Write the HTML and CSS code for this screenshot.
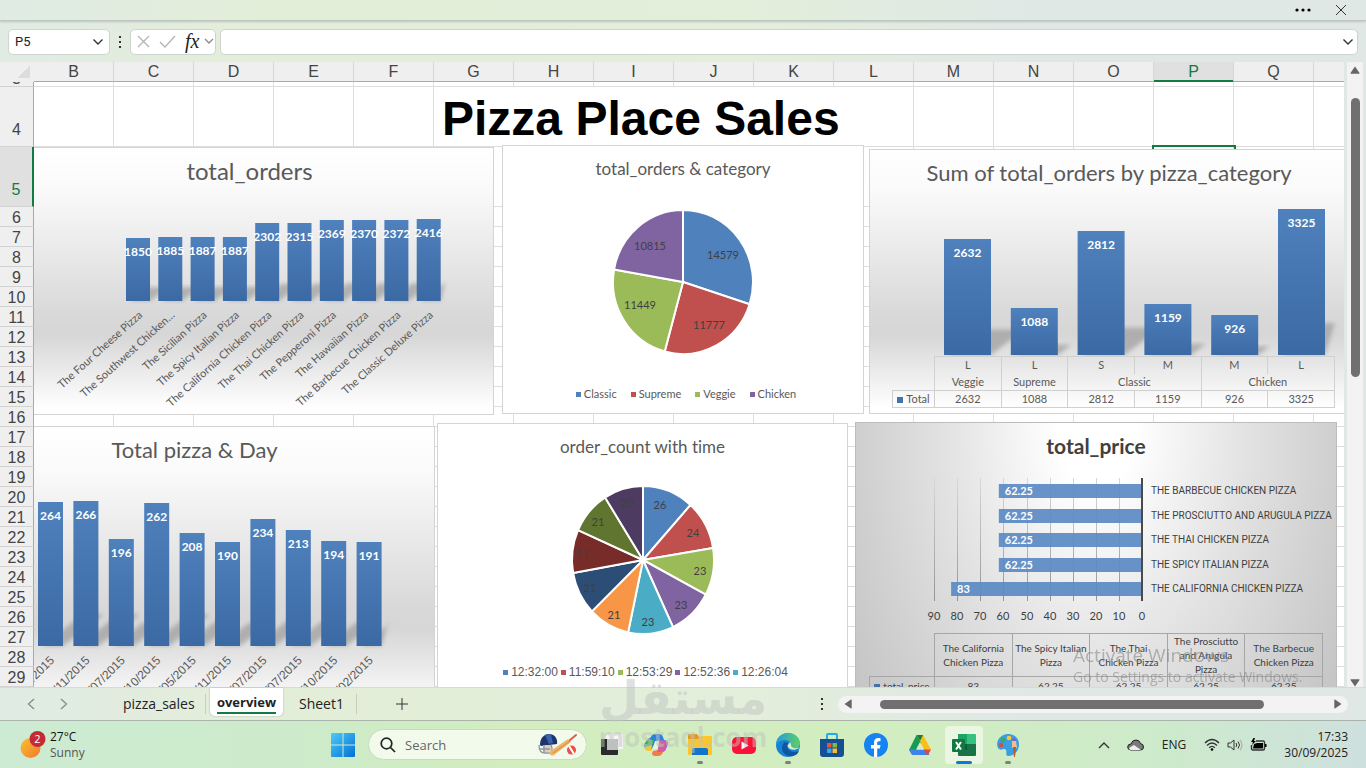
FILE: index.html
```html
<!DOCTYPE html>
<html lang="en">
<head>
<meta charset="utf-8">
<title>Pizza Place Sales</title>
<link rel="stylesheet" href="styles.css">
</head>
<body>
<div class="app">
  <header class="ribbon">
    <button class="plain" aria-label="More"><svg width="16" height="6" viewBox="0 0 16 6"><circle cx="2" cy="3" r="1.6"/><circle cx="8" cy="3" r="1.6"/><circle cx="14" cy="3" r="1.6"/></svg></button>
    <button class="plain" aria-label="Close"><svg width="12" height="12" viewBox="0 0 12 12"><path class="line" d="M1 1l10 10M11 1L1 11"/></svg></button>
  </header>

  <div class="formula-bar">
    <div class="name-box">
      <input class="name-input" aria-label="Name box" value="P5">
      <button class="plain" aria-label="Open names"><svg width="12" height="8" viewBox="0 0 12 8"><path class="line bold" d="M1.500 1.500L6 6l4.500-4.500"/></svg></button>
    </div>
    <svg class="grip" width="4" height="12" viewBox="0 0 4 12"><path d="M1 0h2v2H1zM1 5h2v2H1zM1 10h2v2H1z"/></svg>
    <div class="fx-box">
      <button class="plain" aria-label="Cancel"><svg width="13" height="13" viewBox="0 0 13 13"><path class="line pale" d="M1 1l11 11M12 1L1 12"/></svg></button>
      <button class="plain" aria-label="Enter"><svg width="17" height="13" viewBox="0 0 17 13"><path class="line pale" d="M1 7l5 5L16 1"/></svg></button>
      <button class="plain fx" aria-label="Insert function"><i>fx</i><svg width="10" height="7" viewBox="0 0 10 7"><path class="line mid" d="M1 1l4 4 4-4"/></svg></button>
    </div>
    <div class="formula-box">
      <input class="formula-input" aria-label="Formula">
      <button class="plain" aria-label="Expand formula bar"><svg width="12" height="8" viewBox="0 0 12 8"><path class="line bold" d="M1.500 1.500L6 6l4.500-4.500"/></svg></button>
    </div>
  </div>

  <main class="workbook">
    <div class="sheet">
      <table class="grid" id="grid"></table>
      <div class="canvas">
        <figure class="chart shade orders">
          <figcaption class="size-xl">total_orders</figcaption>
          <svg id="orders" width="487" height="220" viewBox="6 194 487 220"></svg>
        </figure>
        <figure class="chart category">
          <figcaption class="size-s">total_orders &amp; category</figcaption>
          <svg id="category" width="360" height="192" viewBox="503 192 360 192"></svg>
          <ul class="legend">
            <li class="c1">Classic</li><li class="c2">Supreme</li><li class="c3">Veggie</li><li class="c4">Chicken</li>
          </ul>
        </figure>
        <figure class="chart shade bycat">
          <figcaption class="size-l">Sum of total_orders by pizza_category</figcaption>
          <svg id="bycat" width="478" height="160" viewBox="870 196 478 160"></svg>
          <table class="data">
            <tr class="open"><th class="none"></th><td>L</td><td>L</td><td>S</td><td>M</td><td>M</td><td>L</td></tr>
            <tr class="groups"><th class="none"></th><td>Veggie</td><td>Supreme</td><td colspan="2">Classic</td><td colspan="2">Chicken</td></tr>
            <tr><th class="key">Total</th><td>2632</td><td>1088</td><td>2812</td><td>1159</td><td>926</td><td>3325</td></tr>
          </table>
        </figure>
        <figure class="chart shade byday">
          <figcaption class="size-l">Total pizza &amp; Day</figcaption>
          <svg id="byday" width="479" height="240" viewBox="-45 473 479 240"></svg>
        </figure>
        <figure class="chart bytime">
          <figcaption class="size-s">order_count with time</figcaption>
          <svg id="bytime" width="409" height="192" viewBox="438 470 409 192"></svg>
          <ul class="legend times">
            <li class="c1">12:32:00</li><li class="c2">11:59:10</li><li class="c3">12:53:29</li><li class="c4">12:52:36</li><li class="c5">12:26:04</li>
          </ul>
        </figure>
        <figure class="chart price">
          <figcaption class="strong">total_price</figcaption>
          <svg id="price" width="480" height="164" viewBox="856 469 480 164"></svg>
          <table class="data dark">
            <tr class="names"><th class="none"></th><td>The California Chicken&nbsp;Pizza</td><td>The Spicy Italian Pizza</td><td>The Thai Chicken&nbsp;Pizza</td><td>The Prosciutto and Arugula Pizza</td><td>The Barbecue Chicken&nbsp;Pizza</td></tr>
            <tr class="values"><th class="key">total_price</th><td>83</td><td>62.25</td><td>62.25</td><td>62.25</td><td>62.25</td></tr>
          </table>
        </figure>
      </div>
    </div>
    <div class="vscroll">
      <svg width="10" height="8" viewBox="0 0 10 8"><path d="M5 .5L9.500 7q.2.700-.5.700H1Q.3 7.700.5 7z"/></svg>
      <div class="vtrack"><div class="vthumb"></div></div>
      <svg width="10" height="8" viewBox="0 0 10 8"><path d="M5 7.500L.5 1Q.3.300 1 .3h8q.7 0 .5.700z"/></svg>
    </div>
  </main>

  <nav class="tabs">
    <div class="tab-nav">
      <button class="plain" aria-label="Previous sheet"><svg width="8" height="12" viewBox="0 0 8 12"><path class="line mid" d="M7 1L1.500 6 7 11"/></svg></button>
      <button class="plain" aria-label="Next sheet"><svg width="8" height="12" viewBox="0 0 8 12"><path class="line mid" d="M1 1l5.500 5L1 11"/></svg></button>
    </div>
    <button class="tab first">pizza_sales</button>
    <button class="tab active"><span>overview</span></button>
    <button class="tab">Sheet1</button>
    <button class="plain add" aria-label="New sheet"><svg width="12" height="12" viewBox="0 0 12 12"><path class="line" d="M6 0v12M0 6h12"/></svg></button>
    <svg class="grip push" width="4" height="12" viewBox="0 0 4 12"><path d="M1 0h2v2H1zM1 5h2v2H1zM1 10h2v2H1z"/></svg>
    <div class="hscroll">
      <svg width="8" height="10" viewBox="0 0 8 10"><path d="M.5 5L7 .5q.7-.2.7.500v8q0 .7-.7.500z"/></svg>
      <div class="htrack"><div class="hthumb"></div></div>
      <svg width="8" height="10" viewBox="0 0 8 10"><path d="M7.500 5L1 .5Q.3.300.3 1v8q0 .7.700.5z"/></svg>
    </div>
  </nav>

  <footer class="taskbar">
    <button class="weather">
      <svg width="28" height="28" viewBox="0 0 28 28">
        <defs><linearGradient id="sun" x1="0" y1="0" x2="1" y2="1"><stop offset="0" stop-color="#fdc02f"/><stop offset="1" stop-color="#ee7a30"/></linearGradient></defs>
        <circle cx="10.500" cy="17" r="10" fill="url(#sun)"/><circle cx="17.500" cy="8" r="8" fill="#c42b35"/>
        <text x="17.500" y="12" text-anchor="middle" class="badge">2</text>
      </svg>
      <span class="weather-text"><b>27°C</b><span>Sunny</span></span>
    </button>
    <div class="dock">
      <button class="app-icon start" aria-label="Start"><svg width="24" height="24" viewBox="0 0 24 24"><defs><linearGradient id="win" gradientUnits="userSpaceOnUse" x1="0" y1="0" x2="24" y2="24"><stop offset="0" stop-color="#4ccbfa"/><stop offset="1" stop-color="#0370d6"/></linearGradient></defs><path fill="url(#win)" d="M1 0h10.500v11.500H0V1q0-1 1-1zM12.500 0H23q1 0 1 1v10.500H12.500zM0 12.500h11.500V24H1q-1 0-1-1zM12.500 12.500H24V23q0 1-1 1H12.500z"/></svg></button>
      <label class="search">
        <svg width="16" height="16" viewBox="0 0 16 16"><circle cx="6.500" cy="6.500" r="5.300" class="lens"/><path class="lens" d="M10.500 10.500L15 15"/></svg>
        <input class="search-input" aria-label="Search" placeholder="Search">
        <svg width="40" height="24" viewBox="0 0 40 24">
          <path fill="#1d356b" d="M2 12C2 5 6 1 11 1s9 4 8 10L3 13z"/><path fill="#3c62ad" d="M7 2q4-2 6 0l2 8-4 1z"/>
          <path fill="#e6c9ac" d="M5 12h8v5q-4 4-8 2z"/>
          <path fill="none" stroke="#8798a8" stroke-width="1.300" d="M1 12q0 9 7 8h6M2 16h10M6 12v8M13 12q2 4 0 7"/>
          <path fill="#eeb566" d="M11 19L30 6l3 3-17 13q-4 2-5-3z"/><path stroke="#d95e4c" stroke-width="2" stroke-linecap="round" d="M32 7l6-5"/><path stroke="#cf8b45" d="M15 20L32 8"/>
          <circle cx="33.500" cy="17" r="4.500" fill="#e94f42"/><path fill="none" stroke="#fff" stroke-width="2" d="M31 13l5 8"/>
        </svg>
      </label>
      <div class="apps">
        <button class="app-icon" aria-label="Task view"><svg width="24" height="24" viewBox="0 0 24 24"><path fill="#f7f7f7" d="M6 1h16q1 0 1 1v14H6z"/><path fill="#292c2a" d="M1 6h17v15q0 1-1 1H2q-1 0-1-1z"/><path fill="#bdc0bf" d="M7 6h11v11H7z"/></svg></button>
        <button class="app-icon" aria-label="Copilot"><svg width="24" height="24" viewBox="0 0 24 24">
          <path fill="#2a82dc" d="M7 4q1-3 4-3h5q2 0 3 3l1 3h-5l-4 3-4 7H3Q-1 14 1 10l3-4z"/>
          <path fill="#47b05f" d="M4 7h6L7 17H3Q-1 15 1 11z"/><path fill="#f7c33a" d="M1 14l7-2-1 6H4q-3-1-3-4z"/>
          <path fill="#8c62d5" d="M15 7h5q4 0 4 4l-2 5q-1 3-4 3h-4z"/>
          <path fill="#ef7d4b" d="M9 18l5-1 3-10 4 7-2 5q-1 4-5 4h-3q-3 0-3-3z"/><path fill="#d75c9c" d="M14 16l4-8h5l-2 8q-1 3-4 3h-4z"/>
          <path fill="#e9f5df" d="M11 8h4l-2 8H9z"/></svg></button>
        <button class="app-icon running" aria-label="File Explorer"><svg width="24" height="24" viewBox="0 0 24 24"><path fill="#e49a19" d="M0 2q0-1 1-1h8l2 3v4H0z"/><path fill="#fbc52e" d="M0 6h10l2-3h11q1 0 1 1v17q0 1-1 1H1q-1 0-1-1z"/><path fill="#1176cb" d="M4 22v-5q0-2 2-2h12q2 0 2 2v5z"/></svg></button>
        <button class="app-icon" aria-label="YouTube"><svg width="24" height="24" viewBox="0 0 24 24"><rect y="4" width="24" height="17" rx="5" fill="#fa1238"/><path fill="#fff" d="M9.500 8.500l7 4-7 4z"/></svg></button>
        <button class="app-icon running" aria-label="Edge"><svg width="24" height="24" viewBox="0 0 24 24">
          <defs><linearGradient id="edge" x1="0" x2="1"><stop offset="0" stop-color="#249ce0"/><stop offset="1" stop-color="#5fcf64"/></linearGradient></defs>
          <circle cx="12" cy="12" r="12" fill="#1781d4"/><path fill="url(#edge)" d="M0 11C1 4 6 0 12 0c7 0 12 5 12 10 0 6-8 8-10 5 3-4 0-8-5-8-4 0-8 2-9 6z"/>
          <path fill="#0e57a2" d="M9 9c-5 3-4 14 6 14 4 0 7-2 8-5-4 2-9 1-11-2-1-2-1-4 0-6z"/><path fill="#d5edc5" d="M24 14c-3 4-11 3-12 0-1-2 1-3 2-5 2 3 0 5 4 6q3 1 6-1z"/></svg></button>
        <button class="app-icon" aria-label="Store"><svg width="24" height="24" viewBox="0 0 24 24"><path fill="none" stroke="#28a7ea" stroke-width="2" d="M7 6V2q0-1 1-1h8q1 0 1 1v4"/><path fill="#174f92" d="M0 6h24v15q0 3-3 3H3q-3 0-3-3z"/><path fill="#f05036" d="M7 10h4.500v4.500H7z"/><path fill="#7eba3c" d="M12.500 10H17v4.500h-4.500z"/><path fill="#35a9ed" d="M7 15.500h4.500V20H7z"/><path fill="#fdbb2f" d="M12.500 15.500H17V20h-4.500z"/></svg></button>
        <button class="app-icon" aria-label="Facebook"><svg width="24" height="24" viewBox="0 0 24 24"><circle cx="12" cy="12" r="12" fill="#1583f2"/><path fill="#fff" d="M10 24v-8.500H7V12h3V9.500C10 6.500 11.700 5 14.300 5c1 0 2.200.2 2.200.2v3H15c-1.400 0-1.800.8-1.800 1.700V12h3.300l-.6 3.500h-2.700V24z"/></svg></button>
        <button class="app-icon" aria-label="Google Drive"><svg width="24" height="24" viewBox="0 0 24 24"><path fill="#159c54" d="M8.500 2h3.500l3 5L5.500 22 1 17z"/><path fill="#fdbd18" d="M9 2h6l8 14.500h-7z"/><path fill="#3c83ed" d="M1 16.500h17L21.500 22H5q-1 0-2-1.500z"/><path fill="#e94538" d="M16 16.500h7L20.500 21l-1.500 1z"/><path fill="#d4ecc5" d="M12 9l4 7.500H8z"/><path fill="#187b42" d="M9 2h6l-3 6z"/></svg></button>
        <button class="app-icon current" aria-label="Excel"><svg width="24" height="24" viewBox="0 0 24 24"><path fill="#21a265" d="M6 1h9v10H6z"/><path fill="#35c281" d="M15 1h8q1 0 1 1v9h-9z"/><path fill="#187447" d="M6 11h18v11q0 1-1 1H7q-1 0-1-1z"/><path fill="#115c37" d="M15 11v6H6v-6z"/><rect y="6" width="13" height="13" rx="1" fill="#107840"/><path fill="none" stroke="#fff" stroke-width="2" d="M4 9l5 7.500M9 9l-5 7.500"/></svg></button>
        <button class="app-icon running" aria-label="Paint"><svg width="24" height="24" viewBox="0 0 24 24"><path fill="#3a9ee3" d="M12 1C4 1-1 9 2 15c3 4 6-1 8 2 1 3-1 6 3 6 7-1 10-6 10-12S18 1 12 1z"/><circle cx="7" cy="7" r="2.300" fill="#3cab51"/><circle cx="13" cy="5" r="2.300" fill="#fac82f"/><circle cx="5" cy="12" r="2.300" fill="#e04a42"/><circle cx="18" cy="7" r="2" fill="#8361bd"/><path fill="#f0c08b" d="M16 8h4l1 7h-5z"/><path fill="#b85c28" d="M17 14h3l-1 10h-1z"/></svg></button>
      </div>
    </div>
    <div class="tray">
      <button class="plain" aria-label="Hidden icons"><svg width="12" height="8" viewBox="0 0 12 8"><path class="line bold" d="M1 7l5-5 5 5"/></svg></button>
      <button class="plain cloud" aria-label="OneDrive"><svg width="17" height="12" viewBox="0 0 17 12"><path fill="#777b7e" stroke="#222" d="M4 11q-3.300 0-3.300-3T4 5q1-4 5-4 3.500 0 4.500 3.500 3 .5 3 3.500 0 3-3 3z"/><path fill="#eee" d="M2 9l5-3 7 5H4q-2 0-2-2z"/></svg></button>
      <button class="plain lang">ENG</button>
      <button class="plain status" aria-label="Network, sound and battery">
        <svg width="16" height="13" viewBox="0 0 16 13"><path class="line bold" d="M1 5q7-7 14 0M3 7.500q5-5 10 0M5.200 9.800q2.800-2.800 5.600 0"/><circle cx="8" cy="11.500" r="1.300"/></svg>
        <svg width="16" height="12" viewBox="0 0 16 12"><path class="line" d="M1 4h2.500L7 1v10L3.500 8H1zM9 4q1.500 2 0 4M11 2.500q3 3.500 0 7"/><path class="line pale" d="M13 1q4 5 0 10"/></svg>
        <svg width="17" height="14" viewBox="0 0 17 14"><path class="line bold" d="M6 3h7q1.500 0 1.500 1.500v6q0 1.500-1.500 1.500H3q-1.500 0-1.500-1.500V7"/><path d="M4 6l3-1h6v5.500H3zM15 6h1.500v3H15zM3.500 0L1 4h2L2 7l4-4H4l1-3z"/></svg>
      </button>
      <div class="clock"><span>17:33</span><span>30/09/2025</span></div>
    </div>
  </footer>
</div>
<div class="activate"><p class="activate-title">Activate Windows</p><p class="activate-text">Go to Settings to activate Windows.</p></div>
<div class="mark"><span class="mark-ar" lang="ar">مستقل</span><span class="mark-en">mostaql.com</span></div>
<script src="charts.js"></script>
</body>
</html>
```
FILE: styles.css
```css
* { box-sizing: border-box; }
body { margin: 0; font-family: "Open Sans", sans-serif; font-size: 12px; color: #222; overflow: hidden; }
button, input { font: inherit; color: inherit; background: none; border: 0; padding: 0; margin: 0; }
input { outline: 0; min-width: 0; }
svg { display: block; flex: none; }
.app { display: flex; flex-direction: column; height: 100vh; background: linear-gradient(90deg, #e0ebe4, #e3eed9 20%, #e3eedb 55%, #dfe8e5 75%, #dfe8e5); }
.plain { display: flex; align-items: center; justify-content: center; }
.line { fill: none; stroke: #333; stroke-width: 1; }
.line.bold { stroke-width: 1.4; }
.line.mid { stroke: #8a8a8a; stroke-width: 1.3; }
.line.pale { stroke: #b4b4b4; stroke-width: 1.3; }

.ribbon { display: flex; justify-content: flex-end; align-items: center; gap: 24px; height: 21px; padding-right: 19px; border-bottom: 1px solid #bfc5c1; box-shadow: 0 1px 2px #bcc4be; }
.formula-bar { display: flex; align-items: center; height: 41px; padding: 0 8px; }
.name-box, .fx-box, .formula-box { display: flex; align-items: center; height: 26px; background: #fff; border: 1px solid #d0d4d0; border-radius: 5px; }
.name-box { width: 102px; padding: 0 5px 0 6px; }
.name-input { flex: 1; font-family: Roboto, sans-serif; font-size: 13px; }
.grip { fill: #333; margin: 0 8px; }
.fx-box { width: 86px; padding: 0 1px 0 6px; gap: 9px; }
.fx { gap: 5px; }
.fx i { font: italic 20px "Liberation Serif", serif; }
.formula-box { flex: 1; margin-left: 4px; padding: 0 3px; }
.formula-input { flex: 1; height: 22px; }

.workbook { flex: 1; display: flex; min-height: 0; }
.sheet { position: relative; flex: 1; min-width: 0; overflow: hidden; background: #fff; }
.grid { border-collapse: separate; border-spacing: 0; table-layout: fixed; width: 1394px; font: 16px "Liberation Sans", sans-serif; color: #444; }
.grid th, .grid td { padding: 0; font-weight: normal; }
.grid col { width: 80px; }
.grid .side { width: 34px; }
.grid thead th { height: 20px; line-height: 18px; padding-top: 1px; background: #efefef; border-right: 1px solid #d6d6d6; border-bottom: 1px solid #a9a9a9; }
.grid thead .picked { background: #e0e0e0; border-bottom-color: #107c41; box-shadow: inset 0 -1px #107c41; color: #107c41; }
.grid thead .corner { border-right-color: #efefef; border-bottom-color: #efefef; background: linear-gradient(135deg, #efefef 50%, #dcdcdc 50%) 18px 4px / 12px 12px no-repeat #efefef; }
.grid tbody th { background: #efefef; border-right: 1px solid #a9a9a9; border-bottom: 1px solid #d2d2d2; }
.grid tbody td { border-right: 1px solid #dedede; border-bottom: 1px solid #dedede; }
.head { display: flex; align-items: flex-end; justify-content: center; height: 19px; line-height: 17px; overflow: hidden; }
.tiny .head { height: 4px; line-height: 14px; }
.tall .head { height: 59px; line-height: 32px; }
.grid .row-picked th { background: #e0e0e0; border-right: 2px solid #107c41; color: #107c41; }
.grid td.cell-picked { outline: 2px solid #107c41; }
.grid .heading { font-weight: bold; font-size: 48px; line-height: 50px; color: #000; padding: 4px 0 0 8px; white-space: nowrap; text-align: left; }

.canvas { position: absolute; inset: 20px 0 0 34px; overflow: hidden; }
.chart { position: absolute; margin: 0; border: 1px solid #d4d4d4; background: #fff; display: flex; flex-direction: column; color: #595959; font-family: Lato, sans-serif; font-size: 11px; font-variant-ligatures: none; overflow: hidden; }
.chart text { font-size: 11px; fill: #595959; }
.chart .value { font-size: 12px; font-weight: bold; fill: #fff; text-anchor: middle; }
.chart .slice { fill: #404040; text-anchor: middle; }
.chart .date { font-family: "Liberation Sans", sans-serif; font-size: 12px; }
.chart .upper { font-family: Roboto, sans-serif; font-size: 10px; fill: #404040; }
.chart .start { text-anchor: start; font-size: 11px; }
.shade { background: linear-gradient(#fff, #fafafa 15%, #d9d9d9 62%, #d6d6d6 70%, #fff 98%); }
.orders { left: -29px; top: 65px; width: 489px; height: 268px; }
.category { left: 468px; top: 63px; width: 362px; height: 269px; }
.bycat { left: 835px; top: 67px; width: 480px; height: 265px; }
.byday { left: -80px; top: 344px; width: 481px; height: 290px; }
.bytime { left: 403px; top: 341px; width: 411px; height: 290px; }
.price { left: 821px; top: 340px; width: 482px; height: 310px; background: radial-gradient(ellipse 320px 520px at 50% 0, #fff 0, #fff 12%, #e4e4e4 45%, #cfcfcf 75%, #bfbfbf); border-color: #bdbdbd; }
figcaption { text-align: center; line-height: 34px; padding: 6px 0; }
.size-s { font-size: 17px; }
.size-l { font-size: 22px; }
.size-xl { font-size: 24px; }
.strong { font-size: 21px; font-weight: bold; color: #404040; }
.legend { display: flex; justify-content: center; gap: 14px; list-style: none; margin: 0; padding: 0 0 0 6px; line-height: 20px; }
.legend li { display: flex; align-items: center; gap: 3px; }
.legend li::before { content: ""; width: 5px; height: 5px; background: currentColor; }
.times { font: 12px "Liberation Sans", sans-serif; line-height: 20px; gap: 3px; }
.legend .c1::before { background: #4f81bd; }
.legend .c2::before { background: #c0504d; }
.legend .c3::before { background: #9bbb59; }
.legend .c4::before { background: #8064a2; }
.legend .c5::before { background: #4bacc6; }
.data { border-collapse: collapse; table-layout: fixed; width: 443px; margin-left: 22px; font-size: 11px; line-height: 14px; text-align: center; }
.data th, .data td { border: 1px solid #d0d0d0; padding: 0; font-weight: normal; height: 17px; }
.data th { width: 42px; }
.data .none { border: 0; }
.data .open td { border-bottom: 0; }
.data .groups td { border-top: 0; }
.key::before { content: ""; display: inline-block; width: 6px; height: 6px; margin-right: 3px; background: #4372ac; }
.dark { width: 454px; margin-left: 13px; font-size: 10px; color: #404040; }
.dark th { width: 65px; }
.data.dark th, .data.dark td { border-color: #a6a6a6; }
.data.dark .none { border-color: transparent; }
.data.dark .names td { height: 43px; }
.data.dark .values td { height: 19px; }

.vscroll { width: 22px; display: flex; flex-direction: column; align-items: center; justify-content: space-between; padding: 4px 0 0; fill: #666; background: linear-gradient(90deg, transparent 3px, #f3f3f3 3px, #f3f3f3 19px, transparent 19px); }
.vtrack { flex: 1; width: 9px; padding: 24px 0; }
.vthumb { height: 50%; border-radius: 5px; background: #707070; }

.tabs { display: flex; align-items: center; height: 33px; border-top: 1px solid #d5dcd2; font-size: 14px; }
.tab-nav { display: flex; gap: 25px; width: 111px; padding-left: 27px; }
.tab { height: 20px; line-height: 18px; padding: 0 12px; border-right: 1px solid #c5ccc2; }
.tab.first { width: 95px; }
.tab.active { align-self: flex-start; width: 73px; height: 28px; margin: 0 4px; padding: 2px 0 0; background: #fff; border: 0; border-radius: 0 0 5px 5px; box-shadow: 0 0 2px #aaa; font-weight: bold; font-size: 13px; }
.tab.active span { display: inline-block; border-bottom: 2px solid #107c41; height: 21px; }
.add { margin-left: 39px; }
.push { margin: 0 14px 0 auto; }
.hscroll { display: flex; align-items: center; width: 37.3%; height: 17px; border-radius: 9px; padding: 0 6px; background: #f3f3f3; fill: #666; margin-right: 18px; }
.htrack { flex: 1; padding: 0 70px 0 28px; }
.hthumb { height: 9px; border-radius: 5px; background: #707070; }

.taskbar { display: flex; align-items: center; height: 48px; border-top: 1px solid #a9b3a9; background: linear-gradient(90deg, #cdebd3, #cdebca 22%, #d3edbf 38%, #d2edc1 68%, #cdeacb 85%, #cee0de); }
.weather { display: flex; align-items: center; gap: 2px; width: 324px; padding-left: 20px; text-align: left; }
.badge { font: 11px "Open Sans", sans-serif; fill: #fff; }
.weather-text { display: flex; flex-direction: column; line-height: 16px; color: #555; }
.weather-text b { font-weight: normal; color: #111; }
.dock { display: flex; align-items: center; }
.start { margin-right: 6px; }
.app-icon { position: relative; width: 38px; height: 38px; display: flex; align-items: center; justify-content: center; border-radius: 4px; }
.apps { display: flex; gap: 6px; margin-left: 6px; }
.running::after, .current::after { content: ""; position: absolute; bottom: 0; left: 16px; width: 6px; height: 3px; border-radius: 2px; background: #7b827a; }
.current { background: #eaf6e2; }
.current::after { left: 11px; width: 16px; background: #0a7ad6; }
.search { display: flex; align-items: center; gap: 9px; width: 219px; height: 31px; padding: 0 8px 0 11px; border-radius: 16px; background: #f2faec; border: 1px solid #c9dcc2; }
.search-input { flex: 1; font-size: 13px; }
.search-input::placeholder { color: #666; opacity: 1; }
.lens { fill: none; stroke: #222; stroke-width: 1.700; }
.tray { display: flex; align-items: center; margin-left: auto; padding-right: 18px; }
.cloud { margin: 0 18px 0 17px; }
.lang { font-size: 12px; }
.status { gap: 7px; margin: 0 17px 0 18px; }
.clock { display: flex; flex-direction: column; text-align: right; line-height: 16px; }

.activate { position: fixed; right: 57px; bottom: 81px; min-width: 236px; color: rgba(130, 130, 130, .55); pointer-events: none; }
.activate p { margin: 0; }
.activate-title { font-size: 19px; line-height: 24px; }
.activate-text { font-size: 14px; line-height: 20px; }
.mark { position: fixed; left: 600px; bottom: 17px; width: 166px; display: flex; flex-direction: column; align-items: center; color: rgba(190, 196, 192, .5); font-weight: bold; pointer-events: none; }
.mark-ar { font-family: "DejaVu Sans", sans-serif; font-size: 46px; line-height: 50px; }
.mark-en { font-size: 26px; line-height: 28px; }
```
FILE: charts.js
```js
const grid = document.getElementById('grid');
const letters = 'BCDEFGHIJKLMNOPQR'.split('');
let html = '<colgroup><col class="side">' + letters.map(() => '<col>').join('') + '</colgroup><thead><tr><th class="corner"></th>';
letters.forEach(l => { html += `<th class="${l === 'P' ? 'picked' : ''}">${l === 'R' ? '' : l}</th>`; });
html += '</tr></thead><tbody>';
for (let row = 3; row <= 29; row++) {
  const kind = row === 3 ? 'tiny' : row === 4 ? 'tall' : row === 5 ? 'tall row-picked' : '';
  html += `<tr class="${kind}"><th><div class="head">${row}</div></th>`;
  letters.forEach((l, i) => {
    if (row === 4 && l === 'G') html += '<td class="heading" colspan="6">Pizza Place Sales</td>';
    else if (row === 4 && i > 5 && i < 11) return;
    else html += `<td class="${row === 5 && l === 'P' ? 'cell-picked' : ''}"></td>`;
  });
  html += '</tr>';
}
grid.innerHTML = html + '</tbody>';

const defs = id => `<defs><linearGradient id="${id}-bar" x1="0" y1="0" x2="0" y2="1"><stop offset="0" stop-color="#4f81bd"/><stop offset="1" stop-color="#3b69a3"/></linearGradient><filter id="${id}-soft" x="-20%" y="-20%" width="140%" height="140%"><feGaussianBlur stdDeviation="2"/></filter></defs>`;

function columns(id, o) {
  let shadows = '', bars = '', values = '';
  o.tops.forEach((top, i) => {
    const x = o.x + i * o.step, rise = (o.base - top) * o.rise, lean = rise * 1.3, right = x + o.width;
    shadows += `<path filter="url(#${id}-soft)" fill="#999" opacity=".65" d="M${x + 4} ${o.base}L${x + 4 + lean} ${o.base - rise}H${Math.min(right + lean, o.edge)}L${right} ${o.base}z"/>`;
    bars += `<rect x="${x}" y="${top}" width="${o.width}" height="${o.base - top}" fill="url(#${id}-bar)"/>`;
    values += `<text class="value" x="${x + o.width / 2}" y="${top + 18}">${o.values[i]}</text>`;
  });
  let names = '';
  (o.names || []).forEach((name, i) => {
    names += `<text class="${o.nameClass}" text-anchor="end" transform="translate(${o.nameX + i * o.step} ${o.nameY}) rotate(${o.angle})">${name}</text>`;
  });
  document.getElementById(id).innerHTML = defs(id) + shadows + bars + values + names;
}

columns('orders', {
  x: 126, step: 32.3, width: 24, base: 301, rise: .22, edge: 445,
  tops: [238, 237, 237, 237, 223, 223, 220, 220, 220, 219],
  values: [1850, 1885, 1887, 1887, 2302, 2315, 2369, 2370, 2372, 2416],
  names: ['The Four Cheese Pizza', 'The Southwest Chicken…', 'The Sicilian Pizza', 'The Spicy Italian Pizza', 'The California Chicken Pizza', 'The Thai Chicken Pizza', 'The Pepperoni Pizza', 'The Hawaiian Pizza', 'The Barbecue Chicken Pizza', 'The Classic Deluxe Pizza'],
  nameClass: '', nameX: 143, nameY: 316, angle: -42
});
columns('bycat', {
  x: 944, step: 66.8, width: 47, base: 355, rise: .22, edge: 1335,
  tops: [239, 308, 231, 304, 315, 209],
  values: [2632, 1088, 2812, 1159, 926, 3325]
});
columns('byday', {
  x: 38, step: 35.4, width: 25, base: 646, rise: .22, edge: 388,
  tops: [502, 501, 539, 503, 533, 542, 519, 530, 541, 542],
  values: [264, 266, 196, 262, 208, 190, 234, 213, 194, 191],
  names: ['/2015', '/11/2015', '/07/2015', '/10/2015', '/05/2015', '/11/2015', '/07/2015', '/07/2015', '/10/2015', '/02/2015'],
  nameClass: 'date', nameX: 55, nameY: 661, angle: -45
});

function pie(id, cx, cy, rx, ry, slices) {
  const total = slices.reduce((sum, s) => sum + s[0], 0);
  let angle = 0, shapes = '', labels = '';
  slices.forEach(([value, color, x, y]) => {
    const end = angle + value / total * Math.PI * 2;
    const at = a => `${cx + rx * Math.sin(a)} ${cy - ry * Math.cos(a)}`;
    shapes += `<path fill="${color}" stroke="#fff" stroke-width="2" stroke-linejoin="round" d="M${cx} ${cy}L${at(angle)}A${rx} ${ry} 0 0 1 ${at(end)}z"/>`;
    labels += `<text class="slice" x="${x}" y="${y + 4}">${value}</text>`;
    angle = end;
  });
  document.getElementById(id).innerHTML = shapes + labels;
}
pie('category', 683, 282, 70, 72, [
  [14579, '#4f81bd', 723, 255], [11777, '#c0504d', 709, 325], [11449, '#9bbb59', 640, 305], [10815, '#8064a2', 650, 246]
]);
pie('bytime', 643, 560, 71, 74, [
  [26, '#4f81bd', 660, 505], [24, '#c0504d', 693, 533], [23, '#9bbb59', 700, 571], [23, '#8064a2', 681, 605], [23, '#4bacc6', 648, 622],
  [21, '#f79646', 614, 615], [21, '#2c4d75', 590, 588], [21, '#772c2a', 582, 554], [21, '#5f7530', 598, 522], [20, '#4d3b62', 627, 503]
]);

const price = document.getElementById('price');
const rows = [['62.25', 'THE BARBECUE CHICKEN PIZZA'], ['62.25', 'THE PROSCIUTTO AND ARUGULA PIZZA'], ['62.25', 'THE THAI CHICKEN PIZZA'], ['62.25', 'THE SPICY ITALIAN PIZZA'], ['83', 'THE CALIFORNIA CHICKEN PIZZA']];
let out = '<defs><linearGradient id="rule" gradientUnits="userSpaceOnUse" x1="0" y1="478" x2="0" y2="600"><stop offset="0" stop-color="#d8d8d8"/><stop offset="1" stop-color="#959595"/></linearGradient></defs>';
for (let n = 0; n <= 9; n++) {
  const x = Math.round(1142 - n * 23.1);
  if (n) out += `<rect x="${x}" y="478" width="1" height="123" fill="url(#rule)"/>`;
  out += `<text class="slice" x="${x}" y="620">${n * 10}</text>`;
}
rows.forEach(([value, name], i) => {
  const y = Math.round(484 + i * 24.6), width = value * 2.3;
  out += `<rect x="${1142 - width}" y="${y}" width="${width}" height="14" fill="#5b8bc5" opacity=".93"/><text class="value start" x="${1148 - width}" y="${y + 11}">${value}</text><text class="upper" x="1151" y="${y + 10}">${name}</text>`;
});
price.innerHTML = out + '<rect x="1141" y="478" width="2" height="123" fill="#4a4a4a"/>';
```
